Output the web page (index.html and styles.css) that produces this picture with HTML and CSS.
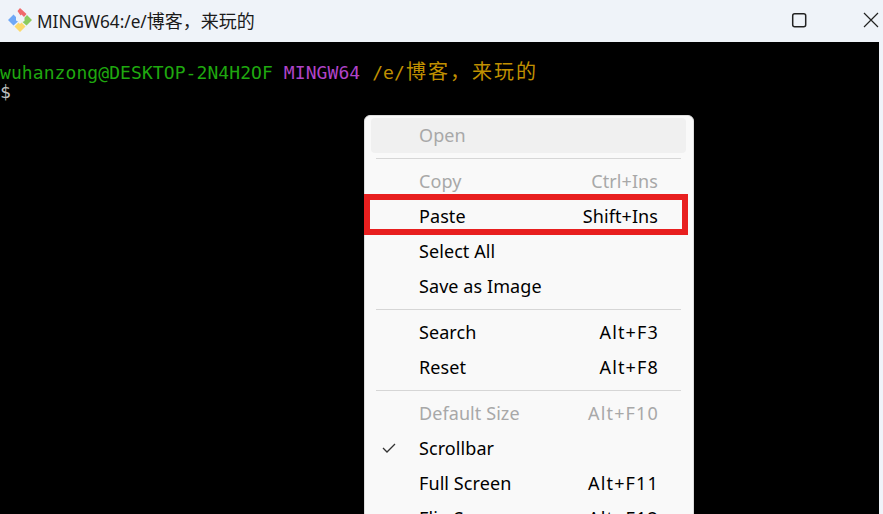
FILE: index.html
```html
<!DOCTYPE html>
<html lang="en">
<head>
<meta charset="utf-8">
<title>MINGW64</title>
<link rel="stylesheet" href="styles.css">
</head>
<body>
<div class="window">
  <header class="titlebar">
    <svg class="logo" width="26" height="26" viewBox="0 0 26 26">
      <path d="M13 1 L19.5 7 L17 10 L14.5 7.5 L13.5 8.5 L10.5 4 Z" fill="#f0696b"/>
      <path d="M25 13 L20 8 L17.5 10.8 L17.5 14 L15.5 15 L19.5 18.5 Z" fill="#8ccb5e"/>
      <path d="M13 25 L7.5 19.5 L11.5 15.5 L13 17 L14.5 15.5 L18.5 19.5 Z" fill="#fbd96c"/>
      <path d="M1 13 L6.5 7.5 L9 10 L9 13.5 L11 14.5 L6.5 18.5 Z" fill="#6fa8f7"/>
    </svg>
    <span class="title">MINGW64:/e/<span class="title-cjk">博客，来玩的</span></span>
    <div class="controls">
      <svg width="16" height="16" viewBox="0 0 16 16"><rect x="1.7" y="1.7" width="13" height="13" rx="2" fill="none" stroke="#222" stroke-width="1.5"/></svg>
      <svg width="16" height="16" viewBox="0 0 16 16"><path d="M1 1 L15 15 M15 1 L1 15" fill="none" stroke="#222" stroke-width="1.2"/></svg>
    </div>
  </header>
  <main class="terminal">
    <div class="line"><span class="green">wuhanzong@DESKTOP-2N4H2OF</span> <span class="purple">MINGW64</span> <span class="yellow">/e/<span class="cjk">博客，来玩的</span></span></div>
    <div class="line prompt">$</div>
  </main>
  <nav class="menu">
    <div class="item disabled open"><span>Open</span></div>
    <hr class="sep">
    <div class="item disabled"><span>Copy</span><span>Ctrl+Ins</span></div>
    <div class="item"><span>Paste</span><span>Shift+Ins</span><i class="annot"></i></div>
    <div class="item"><span>Select All</span></div>
    <div class="item"><span>Save as Image</span></div>
    <hr class="sep">
    <div class="item"><span>Search</span><span class="key">Alt+F3</span></div>
    <div class="item"><span>Reset</span><span class="key">Alt+F8</span></div>
    <hr class="sep">
    <div class="item disabled"><span>Default Size</span><span class="key">Alt+F10</span></div>
    <div class="item"><svg class="check" width="16" height="12" viewBox="0 0 16 12"><path d="M2 6 L6 10 L14 2" fill="none" stroke="#333" stroke-width="1.3"/></svg><span>Scrollbar</span></div>
    <div class="item"><span>Full Screen</span><span class="key">Alt+F11</span></div>
    <div class="item"><span>Flip Screen</span><span class="key">Alt+F12</span></div>
  </nav>
</div>
</body>
</html>
```
FILE: styles.css
```css
html, body { margin: 0; padding: 0; height: 100%; overflow: hidden; background: #eff3f9; }
.window { position: relative; width: 883px; height: 514px; overflow: hidden; display: flex; flex-direction: column; }
.titlebar { height: 42px; flex: none; display: flex; align-items: center; background: #eff3f9; padding-left: 7px; box-sizing: border-box; }
.logo { flex: none; margin-top: -3px; }
.title { margin-left: 4px; margin-top: -3px; font: 17.2px "Noto Sans", "Noto Sans CJK SC", sans-serif; color: #1a1a1a; white-space: nowrap; }
.title-cjk { font-size: 18px; }
.controls { margin-left: auto; display: flex; align-items: center; gap: 56px; padding-right: 4px; margin-top: -2px; }
.terminal { flex: 1; width: 879px; background: #000; padding-top: 20px; box-sizing: border-box; font: 18px/20px "DejaVu Sans Mono", "Noto Sans CJK SC", monospace; letter-spacing: 0.08px; color: #bfbfbf; }
.line { height: 20px; white-space: pre; }
.green { color: #1fa80f; }
.purple { color: #b044c8; }
.yellow { color: #c09000; margin-left: 1px; }
.cjk { font-size: 20px; letter-spacing: 2px; margin-left: 1px; }
.prompt { color: #bfbfbf; }
.menu { position: absolute; left: 364px; top: 115px; width: 330px; box-sizing: border-box; padding: 2px 7px 0 6px; background: #f9f9f9; border: 1px solid #ddd; border-radius: 6px; font: 18px "Noto Sans", "Noto Sans CJK SC", sans-serif; letter-spacing: 0.08px; color: #000; }
.item { position: relative; height: 35px; box-sizing: border-box; display: flex; align-items: center; justify-content: space-between; padding: 0 28px 2px 48px; white-space: nowrap; }
.key { letter-spacing: 1.15px; margin-right: -1px; }
.open { background: #f0f0f0; border-radius: 4px; }
.disabled { color: #a8a8a8; }
.sep { height: 1px; border: 0; margin: 5px; background: #d6d6d6; }
.check { position: absolute; left: 10px; top: 11px; }
.annot { position: absolute; left: -7px; right: -2px; top: -5px; bottom: -1px; border: 6px solid #e81f1f; }
```
